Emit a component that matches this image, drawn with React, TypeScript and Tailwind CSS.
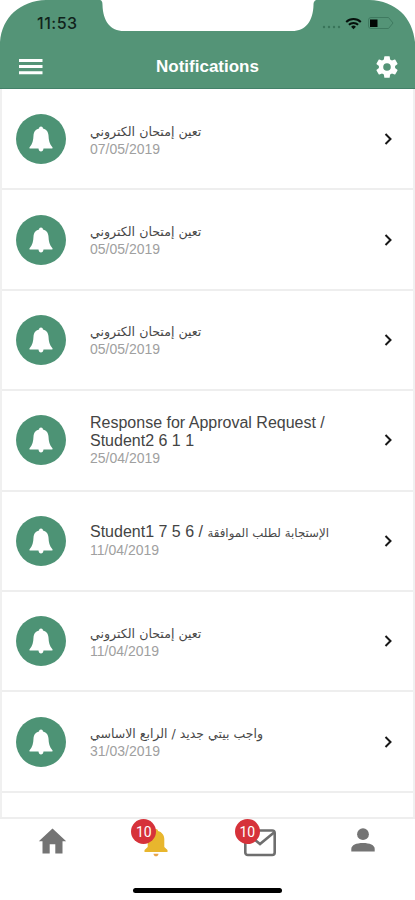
import type { ReactNode } from "react";

type Notification = {
  id: number;
  title: ReactNode;
  date: string;
};

function Arabic({ children, className }: { children: string; className: string }) {
  return (
    <bdi dir="rtl" lang="ar" className={`font-['DejaVu_Sans',sans-serif] tracking-normal text-[#484848] ${className}`}>
      {children}
    </bdi>
  );
}

const examTitle = <Arabic className="text-[12.600px]">تعين إمتحان الكتروني</Arabic>;

const notifications: Notification[] = [
  { id: 1, title: examTitle, date: "07/05/2019" },
  { id: 2, title: examTitle, date: "05/05/2019" },
  { id: 3, title: examTitle, date: "05/05/2019" },
  {
    id: 4,
    title: (
      <>
        Response for Approval Request /<br />
        Student2 6 1 1
      </>
    ),
    date: "25/04/2019",
  },
  {
    id: 5,
    title: (
      <>
        Student1 7 5 6 / <Arabic className="text-[11.800px]">الإستجابة لطلب الموافقة</Arabic>
      </>
    ),
    date: "11/04/2019",
  },
  { id: 6, title: examTitle, date: "11/04/2019" },
  { id: 7, title: <Arabic className="text-[12.500px]">واجب بيتي جديد / الرابع الاساسي</Arabic>, date: "31/03/2019" },
];

function StatusBar() {
  return (
    <div className="flex h-[46px] items-center justify-between pl-[37px] pr-[20px] text-[#10231b]">
      <span className="font-['Inter',sans-serif] text-[16px] font-medium leading-none tracking-[0.5px]">11:53</span>
      <div className="flex items-center">
        <svg width="20" height="4" viewBox="0 0 20 4" className="mt-2 fill-[#39745a]">
          <circle cx="2" cy="2" r="1.2" />
          <circle cx="7" cy="2" r="1.2" />
          <circle cx="12" cy="2" r="1.2" />
          <circle cx="17" cy="2" r="1.2" />
        </svg>
        <svg width="17" height="13" viewBox="0 0 17 13" className="ml-[3px]" fill="none" stroke="#06100c" strokeWidth="2">
          <path d="M1.2 5a10.5 10.5 0 0 1 14.6 0M3.9 7.8a6.6 6.6 0 0 1 9.2 0" />
          <path d="m8.5 12.2 2.4-2.4a3.4 3.4 0 0 0-4.8 0z" fill="#06100c" stroke="none" />
        </svg>
        <svg width="28" height="14" viewBox="0 0 28 14" className="ml-[5px]" fill="none">
          <path d="M4 1.500h17.500L26 7l-4.500 5.500H4A2.500 2.500 0 0 1 1.500 10V4A2.500 2.500 0 0 1 4 1.500z" stroke="#3f7a60" />
          <path d="M3 3.500h7.500v7.500H3z" fill="#020604" />
        </svg>
      </div>
    </div>
  );
}

function Header() {
  return (
    <header className="relative h-[89px] shrink-0">
      <svg width="415" height="89" viewBox="0 0 415 89" className="absolute inset-0">
        <path
          d="M0 89V42C2 17 20 1 46 0h53c3 0 3.500 2 3.500 5C103 21 110 31 124 31h168c14 0 21-10 21.500-26 0-3 1-5 4-5h52c26 1 43 17 45.500 42v47z"
          fill="#549477"
        />
        <path d="M0 88h415v1H0z" fill="#438169" />
      </svg>
      <div className="relative">
        <StatusBar />
        <div className="flex h-[41px] items-center justify-between pl-[19px] pr-[15px] text-white">
          <button type="button" aria-label="Menu">
            <svg width="24" height="18" viewBox="0 0 24 18" fill="currentColor">
              <path d="M0 1h23.500v3H0zM0 7h23.500v3H0zM0 13.300h23.500v3H0z" />
            </svg>
          </button>
          <h1 className="mr-[2px] text-[17px] font-bold leading-none">Notifications</h1>
          <button type="button" aria-label="Settings">
            <svg width="26" height="26" viewBox="0 0 24 24" fill="currentColor">
              <path d="M19.430 12.980c.04-.32.07-.64.07-.98s-.03-.66-.07-.98l2.110-1.650c.19-.15.24-.42.12-.64l-2-3.460c-.12-.22-.39-.3-.61-.22l-2.490 1c-.52-.4-1.080-.73-1.690-.98l-.38-2.650A.488.488 0 0 0 14 2h-4c-.25 0-.46.18-.49.42l-.38 2.650c-.61.25-1.170.59-1.690.98l-2.490-1c-.23-.09-.49 0-.61.22l-2 3.460c-.13.22-.07.49.12.64l2.110 1.650c-.04.32-.07.65-.07.98s.03.66.07.98l-2.110 1.650c-.19.15-.24.42-.12.64l2 3.460c.12.22.39.3.61.22l2.490-1c.52.4 1.080.73 1.690.98l.38 2.650c.03.24.24.42.49.42h4c.25 0 .46-.18.49-.42l.38-2.650c.61-.25 1.170-.59 1.690-.98l2.490 1c.23.09.49 0 .61-.22l2-3.460c.12-.22.07-.49-.12-.64zM12 15.500A3.500 3.500 0 1 1 12 8.500a3.500 3.500 0 0 1 0 7z" />
            </svg>
          </button>
        </div>
      </div>
    </header>
  );
}

function NotificationRow({ item }: { item: Notification }) {
  return (
    <li className="flex h-[100.4px] items-center border-b-2 border-[#eeeeee] pl-[14px] pr-[20px]">
      <span className="flex size-[50px] shrink-0 items-center justify-center rounded-full bg-[#4d9375]">
        <svg width="24" height="26" viewBox="0 0 24 26" fill="white">
          <path d="M12 .5c-1.200 0-1.900.8-2 1.900C6.300 3.200 4.700 6 4.500 9.500 4.300 14.500 3.500 18 .6 21.200c-.5.600-.2 1.300.6 1.300h8.300c.2 1.800 1.100 3 2.500 3s2.300-1.200 2.500-3h8.300c.8 0 1.100-.7.600-1.300-2.900-3.200-3.700-6.700-3.900-11.700C19.300 6 17.700 3.200 14 2.400c-.1-1.100-.8-1.900-2-1.900z" />
        </svg>
      </span>
      <div className="ml-[24px] min-w-0 flex-1 pt-[1px]">
        <div className="whitespace-nowrap text-[16px] leading-[18px] text-[#444]">{item.title}</div>
        <div className="text-[14px] leading-[17px] text-[#a0a0a0]">{item.date}</div>
      </div>
      <svg width="10" height="14" viewBox="0 0 10 14" fill="none" stroke="#171717" strokeWidth="2">
        <path d="m2.500 2 5 5-5 5" />
      </svg>
    </li>
  );
}

function Badge({ count, className }: { count: number; className: string }) {
  return (
    <span
      className={`absolute flex size-[25px] items-center justify-center rounded-full bg-[#d6323a] font-['Roboto',sans-serif] text-[14px] leading-none text-white ${className}`}
    >
      {count}
    </span>
  );
}

function TabBar() {
  return (
    <nav className="h-[83px] shrink-0 border-t-2 border-[#eeeeee] bg-white">
      <div className="grid h-[50px] grid-cols-4 items-start pl-[1px] pt-[9px]">
        <a className="flex justify-center" aria-label="Home">
          <svg width="29" height="26" viewBox="0 0 29 26" fill="#747474">
            <path d="M14.500.5.800 13.200h3.700v12.300h7.200v-9.200h5.600v9.200h7.200V13.200h3.700z" />
          </svg>
        </a>
        <a className="flex justify-center" aria-label="Notifications">
          <span className="relative">
            <svg width="24" height="30" viewBox="0 0 24 30" fill="#e8b62d">
              <path d="M12 1c-1.200 0-2 .8-2 2-3.800 1-6.300 4-6.300 8v8L.5 22v2h23v-2l-3.200-3v-8c0-4-2.500-7-6.300-8 0-1.200-.8-2-2-2z" />
              <path d="M9.500 25.700h5c0 1.500-1 2.600-2.500 2.600s-2.500-1.100-2.500-2.600z" fill="#e8a54a" />
            </svg>
            <Badge count={10} className="-left-[13px] -top-[9px]" />
          </span>
        </a>
        <a className="flex justify-center" aria-label="Messages">
          <span className="relative">
            <svg width="32" height="29" viewBox="0 0 32 29" fill="none" stroke="#6e6e6e" strokeWidth="2.600">
              <rect x="1.300" y="2.500" width="29.400" height="24.500" rx="2.500" />
              <path d="m2 4.500 14 11.500L30 4.500" />
            </svg>
            <Badge count={10} className="-left-[9px] -top-[9px]" />
          </span>
        </a>
        <a className="flex justify-center" aria-label="Profile">
          <svg width="24" height="25" viewBox="0 0 24 25" fill="#747474">
            <circle cx="12" cy="6.200" r="5.900" />
            <path d="M.3 23.500V21c0-4 5-6 11.700-6s11.700 2 11.700 6v2.500z" />
          </svg>
        </a>
      </div>
      <div className="mx-auto mt-[18px] h-[5px] w-[149px] translate-y-px rounded-full bg-black" />
    </nav>
  );
}

export default function App() {
  return (
    <div className="flex h-[900px] w-[415px] flex-col overflow-hidden bg-white font-['Liberation_Sans',Arial,sans-serif]">
      <Header />
      <main className="min-h-0 flex-1 overflow-hidden border-x-2 border-[#f0f0f0] bg-white pt-[1px]">
        <ul>
          {notifications.map((item) => (
            <NotificationRow key={item.id} item={item} />
          ))}
        </ul>
      </main>
      <TabBar />
    </div>
  );
}
